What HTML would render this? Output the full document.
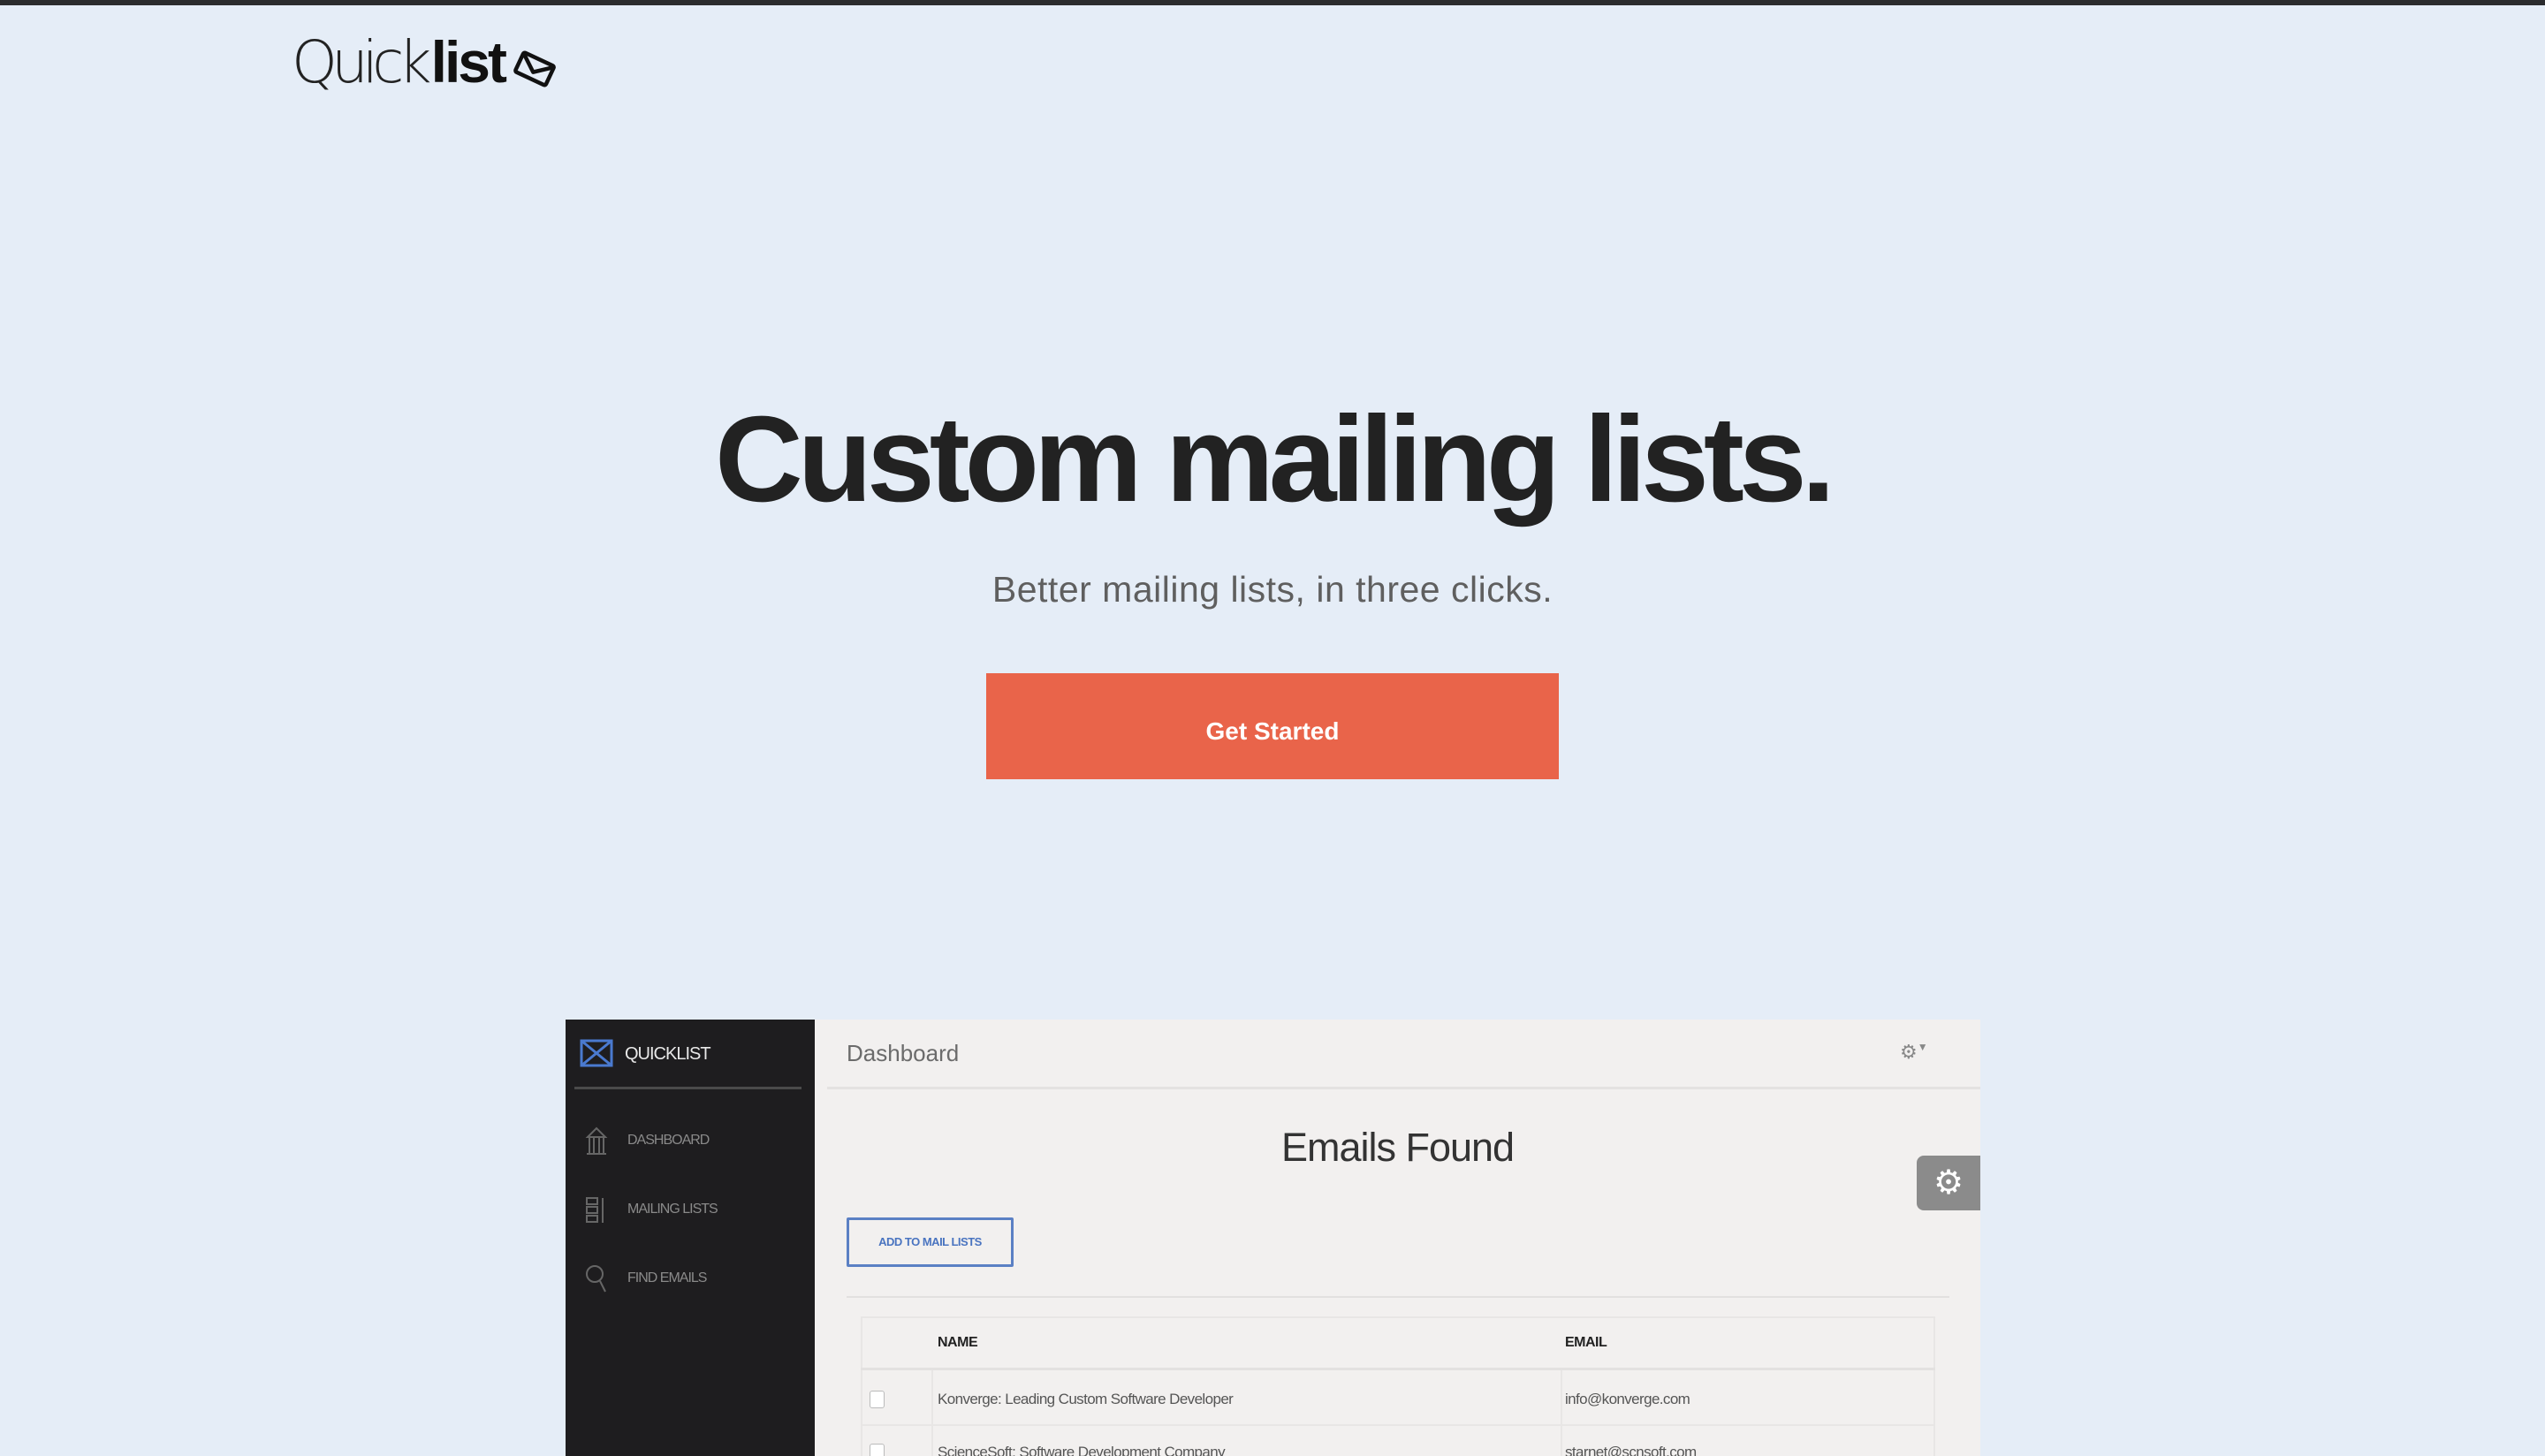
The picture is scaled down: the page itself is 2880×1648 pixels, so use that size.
<!DOCTYPE html>
<html><head><meta charset="utf-8"><style>
*{margin:0;padding:0;box-sizing:border-box}
body{width:2880px;height:1648px;background:#e5edf7;position:relative;overflow:hidden;font-family:"Liberation Sans",sans-serif}
.a{position:absolute;white-space:nowrap}
</style></head><body>
<div class="a" style="left:0;top:0;width:2880px;height:6px;background:#2b2c2e"></div>
<div class="a" style="left:330px;top:30px;font-size:66px;line-height:80px;color:#111"><span style="color:#222;font-family:'DejaVu Sans','Liberation Sans',sans-serif;font-weight:200;letter-spacing:-7px">Quick</span><b style="letter-spacing:-3px;margin-left:6px">list</b></div>
<svg class="a" style="left:580px;top:54px" width="50" height="48" viewBox="0 0 50 48"><g transform="rotate(25 25 24)" fill="none" stroke="#111" stroke-width="4.5" stroke-linejoin="round"><rect x="6" y="12" width="38" height="24" rx="2"/><path d="M6 13 L25 28 L44 13"/></g></svg>

<div class="a" style="left:0;width:2880px;top:440px;text-align:center;font-size:138px;line-height:160px;font-weight:bold;color:#222;letter-spacing:-6px">Custom mailing lists.</div>
<div class="a" style="left:0;width:2880px;top:642px;text-align:center;font-size:41px;line-height:50px;color:#5f5f5f;letter-spacing:0.5px">Better mailing lists, in three clicks.</div>
<div class="a" style="left:1116px;top:762px;width:648px;height:120px;background:#e9644a;color:#fff;font-weight:bold;font-size:28px;line-height:120px;text-align:center;padding-top:6px">Get Started</div>

<div class="a" style="left:640px;top:1154px;width:1601px;height:494px;background:#f2f0ef;overflow:hidden">
  <div class="a" style="left:0;top:0;width:282px;height:494px;background:#1e1d1f"></div>
  <svg class="a" style="left:16px;top:22px" width="38" height="32" viewBox="0 0 38 32"><g fill="none" stroke="#4a7ad0" stroke-width="3"><rect x="2" y="2" width="34" height="28"/><path d="M2 2 L36 30 M36 2 L2 30"/></g></svg>
  <div class="a" style="left:67px;top:26px;font-size:20px;line-height:26px;color:#e8e8e8;letter-spacing:-1px">QUICKLIST</div>
  <div class="a" style="left:10px;top:76px;width:257px;height:3px;background:#4a4a4a"></div>
  <svg class="a" style="left:22px;top:121px" width="26" height="34" viewBox="0 0 26 34"><g fill="none" stroke="#666" stroke-width="2"><path d="M3 12 L13 2 L23 12 Z M5 12v18 M10 12v18 M16 12v18 M21 12v18 M2 31h22"/></g></svg>
  <div class="a" style="left:70px;top:128px;font-size:16px;color:#8a8a8a;letter-spacing:-1px">DASHBOARD</div>
  <svg class="a" style="left:22px;top:200px" width="26" height="32" viewBox="0 0 26 32"><g fill="none" stroke="#666" stroke-width="2"><rect x="2" y="2" width="12" height="7"/><rect x="2" y="12" width="12" height="7"/><rect x="2" y="22" width="12" height="7"/><path d="M20 2v28"/></g></svg>
  <div class="a" style="left:70px;top:206px;font-size:16px;color:#8a8a8a;letter-spacing:-1px">MAILING LISTS</div>
  <svg class="a" style="left:22px;top:276px" width="26" height="34" viewBox="0 0 26 34"><g fill="none" stroke="#666" stroke-width="2"><circle cx="11" cy="12" r="9"/><path d="M17 20 L23 32"/></g></svg>
  <div class="a" style="left:70px;top:284px;font-size:16px;color:#8a8a8a;letter-spacing:-1px">FIND EMAILS</div>

  <div class="a" style="left:318px;top:23px;font-size:26px;line-height:30px;color:#6b6b6b">Dashboard</div>
  <div class="a" style="left:1510px;top:24px;font-size:22px;color:#888">⚙<span style="font-size:12px;vertical-align:top">▼</span></div>
  <div class="a" style="left:296px;top:76px;width:1305px;height:3px;background:#e4e2e1"></div>
  <div class="a" style="left:282px;width:1319px;top:118px;text-align:center;font-size:45px;line-height:54px;color:#333;letter-spacing:-1px">Emails Found</div>
  <div class="a" style="left:1529px;top:154px;width:72px;height:62px;background:#8b8b8b;border-radius:8px 0 0 8px;color:#fff;font-size:38px;line-height:62px;text-align:center">⚙</div>
  <div class="a" style="left:318px;top:224px;width:189px;height:56px;border:3px solid #5b80c4;border-radius:2px;color:#4a74c0;font-size:13px;font-weight:bold;line-height:50px;text-align:center;letter-spacing:-0.5px">ADD TO MAIL LISTS</div>
  <div class="a" style="left:318px;top:313px;width:1248px;height:2px;background:#e2e0df"></div>
  <div class="a" style="left:334px;top:336px;width:1216px;height:200px;border:2px solid #e8e6e5;border-bottom:none"></div>
  <div class="a" style="left:334px;top:394px;width:1216px;height:3px;background:#e3e1e0"></div>
  <div class="a" style="left:334px;top:458px;width:1216px;height:2px;background:#e8e6e5"></div>
  <div class="a" style="left:414px;top:397px;width:2px;height:100px;background:#e8e6e5"></div>
  <div class="a" style="left:1126px;top:397px;width:2px;height:100px;background:#e8e6e5"></div>
  <div class="a" style="left:421px;top:357px;font-size:16px;font-weight:bold;color:#222;letter-spacing:-0.5px">NAME</div>
  <div class="a" style="left:1131px;top:357px;font-size:16px;font-weight:bold;color:#222;letter-spacing:-0.5px">EMAIL</div>
  <div class="a" style="left:344px;top:420px;width:17px;height:20px;border:1.5px solid #bbb;border-radius:3px;background:#fff"></div>
  <div class="a" style="left:421px;top:420px;font-size:17px;color:#555;letter-spacing:-0.6px">Konverge: Leading Custom Software Developer</div>
  <div class="a" style="left:1131px;top:420px;font-size:17px;color:#555;letter-spacing:-0.6px">info@konverge.com</div>
  <div class="a" style="left:344px;top:480px;width:17px;height:20px;border:1.5px solid #bbb;border-radius:3px;background:#fff"></div>
  <div class="a" style="left:421px;top:480px;font-size:17px;color:#555;letter-spacing:-0.6px">ScienceSoft: Software Development Company</div>
  <div class="a" style="left:1131px;top:480px;font-size:17px;color:#555;letter-spacing:-0.6px">starnet@scnsoft.com</div>
</div>
</body></html>
